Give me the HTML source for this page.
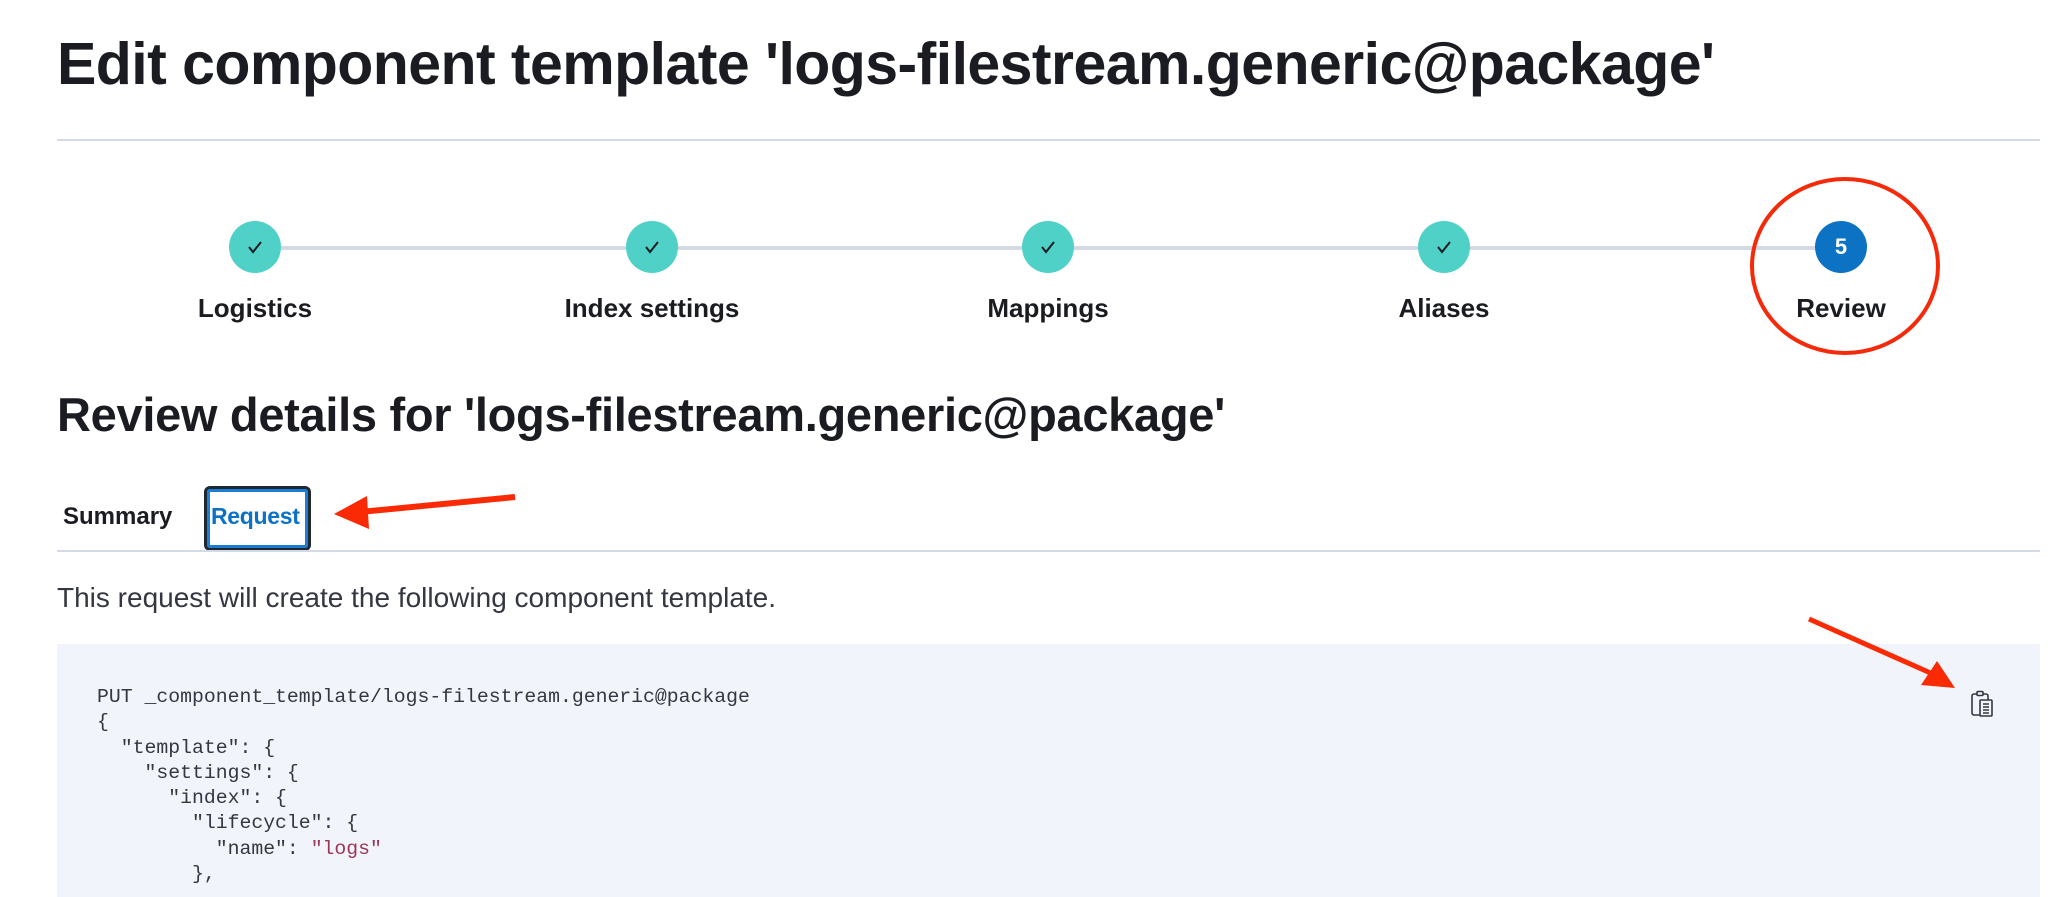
<!DOCTYPE html>
<html><head><meta charset="utf-8"><style>
*{margin:0;padding:0;box-sizing:border-box}
body{width:2048px;height:897px;overflow:hidden;background:#fff;font-family:"Liberation Sans",sans-serif;color:#1a1c21;position:relative}
.abs{position:absolute;white-space:nowrap}
h1{position:absolute;left:57px;top:29px;font-size:59px;font-weight:700;letter-spacing:-0.55px;line-height:70px;white-space:nowrap}
h2{position:absolute;left:57px;top:387px;font-size:47px;font-weight:700;letter-spacing:-0.3px;line-height:56px;white-space:nowrap}
.hr{position:absolute;left:57px;right:8px;height:2px;background:#d3dae6}
.line{position:absolute;top:246px;height:4px;background:#d3dae6}
.c{position:absolute;top:221px;width:52px;height:52px;border-radius:50%;background:#4fd1c7;display:flex;align-items:center;justify-content:center}
.lbl{position:absolute;top:293px;width:300px;text-align:center;font-size:26px;font-weight:700}
pre{position:absolute;left:97px;top:685px;font-family:"Liberation Mono",monospace;font-size:19.8px;line-height:25.3px;color:#343741}
.s{color:#9c3556}
</style></head><body>
<h1>Edit component template 'logs-filestream.generic@package'</h1>
<div class="hr" style="top:139px"></div>
<div class="line" style="left:255px;width:1586px"></div>
<div class="c" style="left:229px"><svg width="20" height="20" viewBox="0 0 20 20"><path d="M4 10l4 5 8-10" fill="none" stroke="#1a1c21" stroke-width="2"/></svg></div>
<div class="c" style="left:626px"><svg width="20" height="20" viewBox="0 0 20 20"><path d="M4 10l4 5 8-10" fill="none" stroke="#1a1c21" stroke-width="2"/></svg></div>
<div class="c" style="left:1022px"><svg width="20" height="20" viewBox="0 0 20 20"><path d="M4 10l4 5 8-10" fill="none" stroke="#1a1c21" stroke-width="2"/></svg></div>
<div class="c" style="left:1418px"><svg width="20" height="20" viewBox="0 0 20 20"><path d="M4 10l4 5 8-10" fill="none" stroke="#1a1c21" stroke-width="2"/></svg></div>
<div class="c" style="left:1815px;background:#0b72c4;color:#fff;font-weight:700;font-size:22px">5</div>
<div class="lbl" style="left:105px">Logistics</div>
<div class="lbl" style="left:502px">Index settings</div>
<div class="lbl" style="left:898px">Mappings</div>
<div class="lbl" style="left:1294px">Aliases</div>
<div class="lbl" style="left:1691px">Review</div>
<h2>Review details for 'logs-filestream.generic@package'</h2>
<div class="abs" style="left:63px;top:503px;font-size:24px;font-weight:700">Summary</div>
<div class="abs" style="left:204px;top:486px;width:107px;height:65px;border:3px solid #1f2733;border-radius:6px;box-shadow:inset 0 0 0 3px #1a7fd4;background:#fff"></div>
<div class="abs" style="left:211px;top:503px;font-size:23px;letter-spacing:-0.3px;font-weight:700;color:#0b72c4">Request</div>
<div class="hr" style="top:550px;height:2px"></div>
<div class="abs" style="left:57px;top:582px;font-size:28px;color:#343741">This request will create the following component template.</div>
<div class="abs" style="left:57px;top:644px;width:1983px;height:253px;background:#f1f4fa"></div>
<pre>PUT _component_template/logs-filestream.generic@package
{
  "template": {
    "settings": {
      "index": {
        "lifecycle": {
          "name": <span class="s">"logs"</span>
        },</pre>
<svg class="abs" style="left:1969px;top:690px" width="26" height="28" viewBox="0 0 26 28">
<g fill="none" stroke="#343741" stroke-width="1.6">
<rect x="3" y="4" width="16" height="21" rx="2"/>
<rect x="8" y="1.5" width="6" height="4" rx="1" fill="#f1f4fa"/>
<rect x="11" y="10" width="12" height="16" rx="1" fill="#f1f4fa"/>
<path d="M14 14h6M14 17h6M14 20h6M14 23h6"/>
</g></svg>
<svg class="abs" style="left:0;top:0" width="2048" height="897">
<ellipse cx="1845" cy="266" rx="93" ry="87" fill="none" stroke="#f52a0a" stroke-width="4"/>
<line x1="515" y1="497" x2="360" y2="512" stroke="#fa2a05" stroke-width="6"/>
<polygon points="334,514 367,496 369,529" fill="#fa2a05"/>
<line x1="1809" y1="619" x2="1935" y2="675" stroke="#fa2a05" stroke-width="5"/>
<polygon points="1955,688 1921,685 1937,661" fill="#fa2a05"/>
</svg>
</body></html>
